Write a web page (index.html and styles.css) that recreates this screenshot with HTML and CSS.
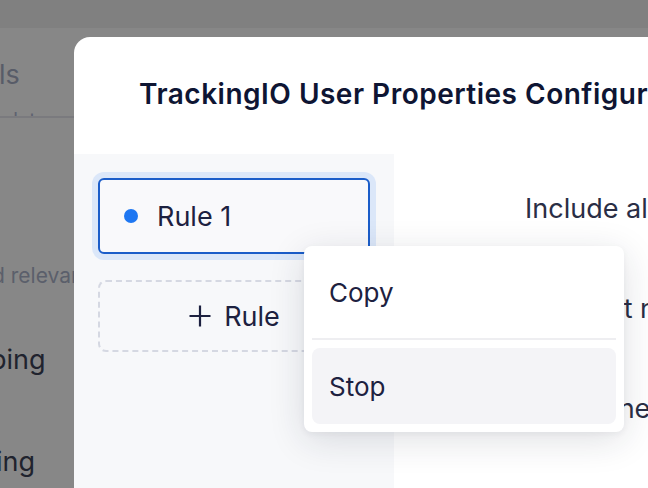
FILE: index.html
```html
<!DOCTYPE html>
<html>
<head>
<meta charset="utf-8">
<link rel="stylesheet" href="styles.css">
</head>
<body>
<div class="page">
  <div class="topbar"></div>
  <div class="bg-content">
    <div class="bg-tab">ls</div>
    <div class="bg-tabline"><span class="bg-clip">the data</span></div>
    <div class="bg-desc">d relevant</div>
    <div class="bg-item bg-item1">ping</div>
    <div class="bg-item bg-item2">ing</div>
  </div>
</div>

<div class="modal">
  <div class="modal-header">
    <h1 class="modal-title">TrackingIO User Properties Configuration</h1>
  </div>
  <div class="modal-body">
    <aside class="sidebar">
      <div class="rule-card">
        <span class="dot"></span>
        <span class="rule-name">Rule 1</span>
      </div>
      <div class="add-rule">
        <svg class="plus" width="24" height="24" viewBox="0 0 24 24"><path d="M12 1.5v21M1.5 12h21" stroke="#1d2140" stroke-width="2.2" fill="none"/></svg>
        <span>Rule</span>
      </div>
    </aside>
    <section class="content">
      <div class="row">Include all users</div>
      <div class="row">Use first n days</div>
      <div class="row">Timezone</div>
    </section>
  </div>
</div>

<div class="menu">
  <div class="menu-item">Copy</div>
  <div class="menu-divider"></div>
  <div class="menu-item active">Stop</div>
</div>
</body>
</html>
```

FILE: styles.css
```css
* { box-sizing: border-box; }
html, body { margin: 0; padding: 0; }
body {
  width: 648px;
  height: 488px;
  overflow: hidden;
  position: relative;
  background: #878787;
  font-family: "Inter", "Noto Sans", sans-serif;
  color: #1d2140;
}
.page { display: flex; flex-direction: column; height: 488px; }
.topbar { height: 28px; background: #808080; flex: none; }
.bg-content { position: relative; flex: 1; }
.bg-tab {
  margin: 30px 0 0 -1px;
  font-size: 27px;
  color: #585c68;
  line-height: 34px;
}
.bg-tabline {
  margin-top: 20px;
  height: 6px;
  overflow: hidden;
  border-bottom: 2px solid #7a7a7e;
  width: 74px;
}
.bg-clip { display: block; font-size: 20px; line-height: 20px; color: #5e6270; margin-top: -2px; margin-left: -30px; white-space: nowrap; }
.bg-desc {
  margin: 144px 0 0 -8px;
  font-size: 21px;
  color: #5b5f6b;
  line-height: 28px;
  white-space: nowrap;
}
.bg-item {
  font-size: 27px;
  color: #20232e;
  line-height: 34px;
  white-space: nowrap;
}
.bg-item1 { margin: 53px 0 0 -10px; }
.bg-item2 { margin: 68px 0 0 -4px; }

.modal {
  position: absolute;
  left: 74px;
  top: 37px;
  width: 900px;
  height: 520px;
  background: #fff;
  border-radius: 16px;
  overflow: hidden;
  display: flex;
  flex-direction: column;
}
.modal-header {
  height: 114px;
  flex: none;
  display: flex;
  align-items: center;
  padding-left: 65px;
}
.modal-title {
  margin: 0;
  font-size: 28px;
  font-weight: 600;
  color: #0e1533;
  white-space: nowrap;
  letter-spacing: 0.5px;
}
.modal-body { flex: 1; display: flex; padding-top: 0; }
.sidebar {
  width: 320px;
  flex: none;
  background: #f7f8fa;
  padding: 24px;
  margin-top: 3px;
}
.rule-card {
  height: 76px;
  border: 2px solid #1b5dc9;
  border-radius: 6px;
  box-shadow: 0 0 0 6px #dbe7f9;
  background: #f9f9fb;
  display: flex;
  align-items: center;
  padding-left: 24px;
  gap: 19px;
}
.dot { width: 14px; height: 14px; border-radius: 50%; background: #1e77f2; flex: none; }
.rule-name { font-size: 27px; color: #1d2140; }
.add-rule {
  margin-top: 26px;
  height: 72px;
  border: 2px dashed #d5d8e2;
  border-radius: 8px;
  display: flex;
  align-items: center;
  justify-content: center;
  gap: 12px;
  font-size: 27px;
  color: #1d2140;
}
.plus { display: block; }
.content { flex: 1; padding: 40px 0 0 131px; }
.row {
  font-size: 27px;
  color: #2a2e45;
  line-height: 36px;
  height: 100px;
  white-space: nowrap;
}

.menu {
  position: absolute;
  left: 304px;
  top: 246px;
  width: 320px;
  padding: 8px;
  background: #fff;
  border-radius: 8px;
  box-shadow: 0 8px 36px rgba(30, 35, 60, 0.14), 0 2px 6px rgba(30, 35, 60, 0.05);
}
.menu-item {
  height: 76px;
  display: flex;
  align-items: center;
  padding-left: 17px;
  font-size: 26px;
  color: #1d2140;
  border-radius: 8px;
}
.menu-item.active { background: #f4f4f7; }
.menu-divider { height: 2px; background: #eeeef1; margin: 8px 0; }
```
